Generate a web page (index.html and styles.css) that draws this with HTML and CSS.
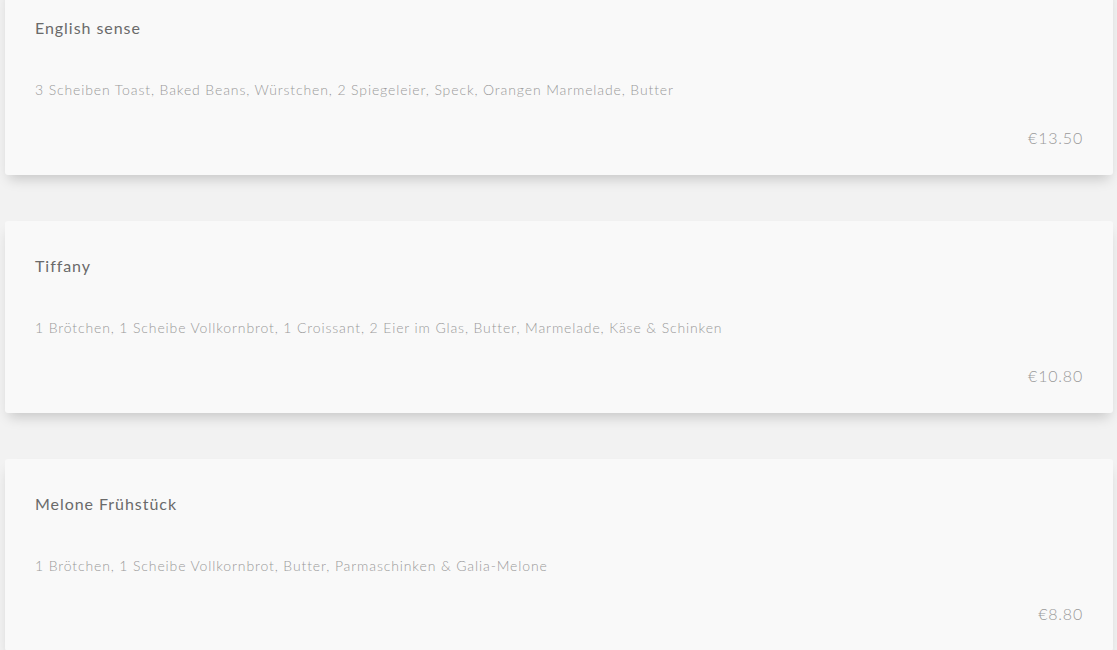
FILE: index.html
```html
<!DOCTYPE html>
<html lang="de">
<head>
    <meta charset="UTF-8">
    <meta name="viewport" content="width=device-width, initial-scale=1.0">
    <title>Frühstück</title>
    <link rel="stylesheet" href="styles.css">
</head>
<body>
    <div class="menu">
        <div class="card">
            <h3 class="card-title">English sense</h3>
            <p class="card-desc">3 Scheiben Toast, Baked Beans, Würstchen, 2 Spiegeleier, Speck, Orangen Marmelade, Butter</p>
            <div class="card-price">€13.50</div>
        </div>
        <div class="card">
            <h3 class="card-title">Tiffany</h3>
            <p class="card-desc">1 Brötchen, 1 Scheibe Vollkornbrot, 1 Croissant, 2 Eier im Glas, Butter, Marmelade, Käse &amp; Schinken</p>
            <div class="card-price">€10.80</div>
        </div>
        <div class="card">
            <h3 class="card-title">Melone Frühstück</h3>
            <p class="card-desc">1 Brötchen, 1 Scheibe Vollkornbrot, Butter, Parmaschinken &amp; Galia-Melone</p>
            <div class="card-price">€8.80</div>
        </div>
    </div>
</body>
</html>
```

FILE: styles.css
```css
body {
    margin: 0;
    background-color: #f2f2f2;
    font-family: Lato, "Open Sans", sans-serif;
    overflow: hidden;
}
.menu {
    display: flex;
    flex-direction: column;
    gap: 46px;
    padding: 0 4px 0 5px;
    margin-top: -17px;
}
.card {
    background-color: #f9f9f9;
    border-radius: 3px;
    padding: 36px 30px 27px;
    box-shadow: 0 8px 12px -4px rgba(0, 0, 0, 0.18);
}
.card-title {
    margin: 0;
    font-size: 16px;
    font-weight: 400;
    line-height: 18px;
    letter-spacing: 0.95px;
    color: #6a6a6a;
}
.card-desc {
    margin: 44px 0 0;
    font-size: 14px;
    font-weight: 300;
    line-height: 18px;
    letter-spacing: 0.88px;
    color: #999;
}
.card-price {
    margin-top: 29px;
    text-align: right;
    font-size: 16px;
    font-weight: 300;
    line-height: 20px;
    letter-spacing: 0.8px;
    color: #999;
}
```
